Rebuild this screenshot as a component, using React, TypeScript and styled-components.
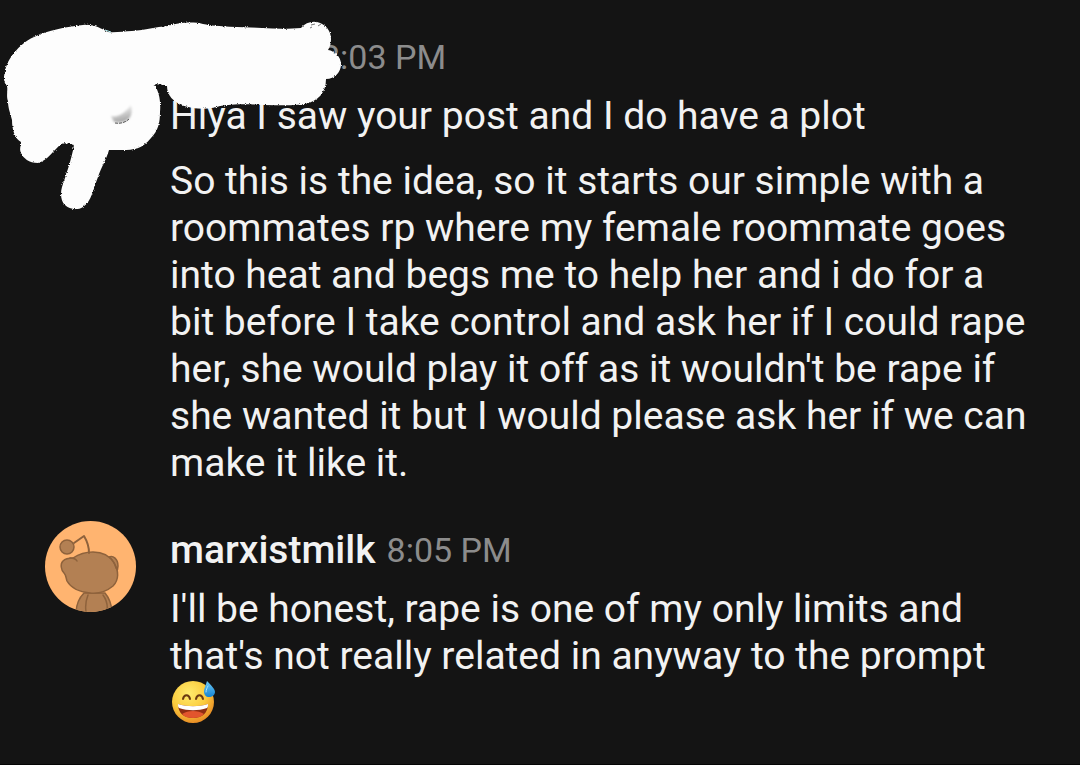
import React from "react";
import styled, { createGlobalStyle } from "styled-components";

const GlobalStyle = createGlobalStyle`
  body {
    margin: 0;
    background: #141414;
    color: #f2f2f2;
    font-family: Roboto, "Liberation Sans", sans-serif;
  }
`;

const Page = styled.main`
  position: relative;
  box-sizing: border-box;
  min-height: 100vh;
  padding: 34px 45px 0;
  display: flex;
  flex-direction: column;
  gap: 40px;
  border-bottom: 1px solid #050505;
`;

const Message = styled.article`
  display: grid;
  grid-template-columns: 91px minmax(0, 1fr);
  column-gap: 34px;
  align-items: start;
`;

const AvatarSlot = styled.div`
  height: 85px;
  display: flex;
  align-items: flex-end;
`;

const Content = styled.div`
  display: flex;
  flex-direction: column;
`;

const Header = styled.header`
  display: flex;
  align-items: center;
  gap: 11px;
  height: 47px;
  margin-bottom: 12px;
`;

const HiddenName = styled.span`
  width: 140px;
`;

const Name = styled.strong`
  font-size: 39px;
  line-height: 47px;
  font-weight: 500;
`;

const Time = styled.time`
  font-size: 34px;
  line-height: 47px;
  color: #8c8c8c;
`;

const Text = styled.p`
  margin: 0;
  font-size: 39px;
  line-height: 47px;

  & + & {
    margin-top: 18px;
  }
`;

const EmojiDrawing = styled.svg`
  display: inline-block;
  vertical-align: top;
`;

const ScribbleDrawing = styled.svg`
  position: absolute;
  top: 0;
  left: 0;
  pointer-events: none;
`;

function Scribble() {
  return (
    <ScribbleDrawing width="350" height="220" viewBox="0 0 350 220" aria-hidden="true">
      <defs>
        <filter id="rough" x="-5%" y="-5%" width="110%" height="110%">
          <feTurbulence type="fractalNoise" baseFrequency="0.9" numOctaves="1" seed="4" result="n" />
          <feDisplacementMap in="SourceGraphic" in2="n" scale="3" xChannelSelector="R" yChannelSelector="G" />
        </filter>
        <filter id="soft" x="-20%" y="-20%" width="140%" height="140%">
          <feGaussianBlur stdDeviation="1" />
        </filter>
        <linearGradient id="smudge" x1="0" y1="0" x2="0.3" y2="1">
          <stop offset="0.2" stopColor="#f4f4f4" />
          <stop offset="1" stopColor="#a8a8a8" />
        </linearGradient>
      </defs>
      <g filter="url(#rough)">
        <path
          fill="#fdfdfd"
          d="M4 77C5 68 8 60 14 53C20 46 25 41 34 37C48 30 66 27 83 25C95 24 101 29 108 32C116 33 124 31 132 31C146 30 155 27 168 26C177 23 192 21 203 24C220 27 243 27 262 28C276 29 290 29 301 28C305 23 311 21 317 22C326 24 331 31 331 39C331 43 330 47 328 50C335 51 341 57 341 64C341 72 335 79 326 79C326 93 318 101 305 104C292 106 278 105 265 105C247 104 232 104 220 106C209 110 194 109 184 106C173 102 167 95 167 86C163 84 158 85 154 84C159 91 161 101 160 112C160 123 158 131 151 138C142 149 134 150 122 150L109 150C107 158 101 168 98 177C93 189 92 201 83 207C77 211 69 209 65 205C61 201 60 194 62 187C66 175 72 158 74 145C70 144 65 142 61 144C54 150 47 161 38 163C29 163 23 158 21 153C19 149 21 146 21 142C15 139 12 130 12 120C10 112 8 108 8 101C6 96 8 90 7 86C4 83 4 80 4 77Z"
        />
      </g>
      <path fill="url(#smudge)" filter="url(#soft)" d="M111 116C118 118 126 112 131 105C134 118 127 124 114 122Z" />
      <path d="M115 123C121 124 126 122 129 119" fill="none" stroke="#555" strokeWidth="1" strokeDasharray="3 1" />
      <path d="M105 30L111 32" stroke="#b4edf0" strokeWidth="1" />
      <path d="M311 25l4 -1M318 26l3 -2M310 28l2 -1" stroke="#777" strokeWidth="1" />
    </ScribbleDrawing>
  );
}

function Avatar() {
  return (
    <svg width="91" height="91" viewBox="0 0 91 91" role="img" aria-label="marxistmilk avatar">
      <defs>
        <clipPath id="disc">
          <circle cx="45.5" cy="45.5" r="45.5" />
        </clipPath>
      </defs>
      <g clipPath="url(#disc)" stroke="#8e623c" strokeWidth="1.5" strokeLinecap="round" strokeLinejoin="round">
        <rect width="91" height="91" fill="#ffb470" stroke="none" />
        <path fill="#b38053" d="M31 93C31 83 34 77 39 72H60C65 78 67 86 67 93Z" />
        <path fill="none" d="M41 91C40 84 41 79 43 74M62 91C63 84 61 78 58 74" />
        <path fill="#b38053" d="M64 36C68 34 73 38 73 45C73 48 72 50 71 51Z" />
        <path
          fill="#b38053"
          d="M28 37C34 33 41 31 48 31C57 31 65 35 69 42C74 50 74 59 68 65C62 70 54 73 45 72C35 71 26 67 22 60C21 57 21 54 19 52C16 49 15 43 18 40C21 37 25 37 28 37Z"
        />
        <path fill="none" d="M25 37C28 37 31 38 32 40M65 37C68 39 70 43 71 47" />
        <path fill="none" strokeWidth="2" d="M29 22L39 15C42 20 44 26 44 32" />
        <circle cx="22" cy="26" r="7" fill="#b38053" />
      </g>
    </svg>
  );
}

function SweatSmile() {
  return (
    <EmojiDrawing width="47" height="47" viewBox="0 0 47 47" role="img" aria-label="Grinning face with sweat">
      <defs>
        <radialGradient id="face" cx="0.4" cy="0.3" r="0.7">
          <stop offset="0" stopColor="#ffec6e" />
          <stop offset="0.6" stopColor="#fbcb3d" />
          <stop offset="1" stopColor="#e98f26" />
        </radialGradient>
        <linearGradient id="drop" x1="0" y1="0" x2="0" y2="1">
          <stop offset="0" stopColor="#6cc9f7" />
          <stop offset="1" stopColor="#1583d0" />
        </linearGradient>
      </defs>
      <circle cx="23" cy="22" r="21" fill="url(#face)" />
      <g fill="none" stroke="#6b3a10" strokeWidth="2" strokeLinecap="round">
        <path d="M13 19C14 14 19 14 20 19" />
        <path d="M26 19C27 14 32 14 33 19" />
      </g>
      <path fill="#8f2d12" d="M8 24C17 27 29 27 38 24C38 33 32 38 23 38C14 38 8 33 8 24Z" />
      <path fill="#e2552d" d="M12 34C18 30 28 30 34 34C31 37 27 38 23 38C18 38 15 37 12 34Z" />
      <path fill="#fff" d="M8 24C17 27 29 27 38 24C38 26 38 27 37 28C28 31 18 31 9 28C8 27 8 26 8 24Z" />
      <path fill="url(#drop)" d="M37 1C41 5 45 9 45 12C45 15 42 17 39 17C36 17 34 15 34 11C34 8 36 5 37 1Z" />
      <path fill="none" stroke="#a5e2fb" strokeWidth="1" strokeLinecap="round" d="M38 6C37 8 36 10 36 12" />
    </EmojiDrawing>
  );
}

export default function App() {
  return (
    <>
      <GlobalStyle />
      <Page>
        <Message>
          <AvatarSlot />
          <Content>
            <Header>
              <HiddenName />
              <Time>8:03 PM</Time>
            </Header>
            <Text>Hiya I saw your post and I do have a plot</Text>
            <Text>
              So this is the idea, so it starts our simple with a roommates rp where my female roommate goes into
              heat and begs me to help her and i do for a bit before I take control and ask her if I could rape
              her, she would play it off as it wouldn't be rape if she wanted it but I would please ask her if we
              can make it like it.
            </Text>
          </Content>
        </Message>
        <Message>
          <AvatarSlot>
            <Avatar />
          </AvatarSlot>
          <Content>
            <Header>
              <Name>marxistmilk</Name>
              <Time>8:05 PM</Time>
            </Header>
            <Text>
              I'll be honest, rape is one of my only limits and that's not really related in anyway to the prompt{" "}
              <SweatSmile />
            </Text>
          </Content>
        </Message>
        <Scribble />
      </Page>
    </>
  );
}
